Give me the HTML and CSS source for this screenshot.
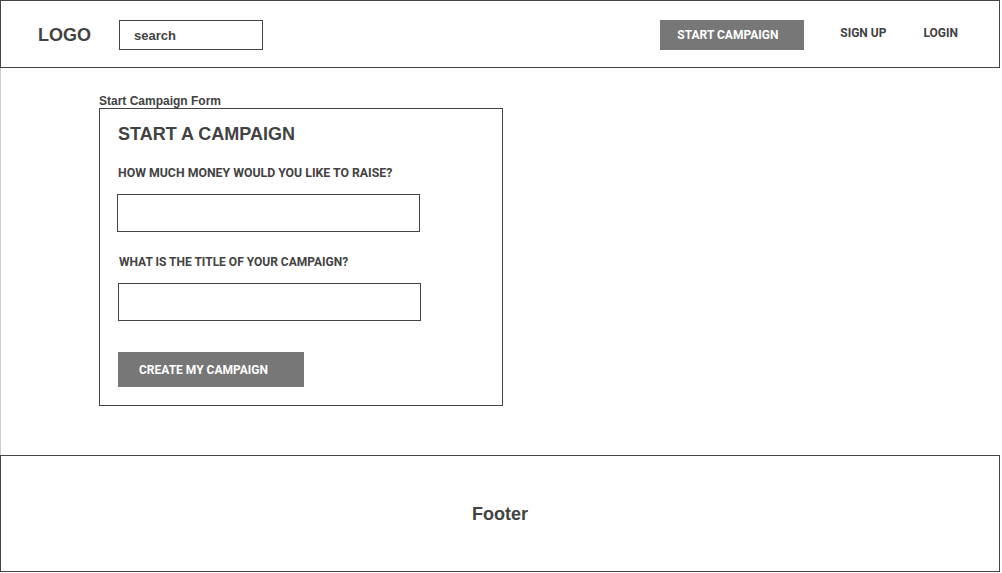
FILE: index.html
```html
<!DOCTYPE html>
<html lang="en">
<head>
<meta charset="utf-8">
<title>Start Campaign</title>
<link rel="stylesheet" href="styles.css">
</head>
<body>
<header class="topbar">
  <div class="logo">LOGO</div>
  <div class="search">search</div>
  <nav class="nav">
    <a class="btn btn-nav" href="#">START CAMPAIGN</a>
    <a class="nav-link signup" href="#">SIGN UP</a>
    <a class="nav-link login" href="#">LOGIN</a>
  </nav>
</header>
<main class="content">
  <div class="caption">Start Campaign Form</div>
  <section class="form-box">
    <h1 class="form-title">START A CAMPAIGN</h1>
    <label class="field-label first">HOW MUCH MONEY WOULD YOU LIKE TO RAISE?</label>
    <div class="field"></div>
    <label class="field-label second">WHAT IS THE TITLE OF YOUR CAMPAIGN?</label>
    <div class="field second"></div>
    <a class="btn btn-create" href="#">CREATE MY CAMPAIGN</a>
  </section>
</main>
<footer class="footer">Footer</footer>
</body>
</html>
```

FILE: styles.css
```css
* { box-sizing: border-box; }
html, body { margin: 0; padding: 0; background: #fff; }
body {
  width: 1002px;
  height: 573px;
  font-family: "Liberation Sans", Arial, sans-serif;
  color: #424242;
}
a { text-decoration: none; color: inherit; }

.topbar {
  width: 1000px;
  height: 68px;
  border: 1px solid #444;
  display: flex;
  align-items: center;
  padding-left: 37px;
}
.logo {
  font-size: 18px;
  font-weight: bold;
  width: 53px;
  margin-top: 2px;
}
.search {
  margin-left: 28px;
  width: 144px;
  height: 30px;
  border: 1px solid #444;
  font-size: 13px;
  font-weight: bold;
  padding-left: 14px;
  display: flex;
  align-items: center;
  margin-top: 2px;
}
.nav {
  margin-left: auto;
  display: flex;
  align-items: center;
  padding-right: 41px;
  font-family: Roboto, "Liberation Sans", sans-serif;
  font-weight: bold;
  font-size: 12px;
}
.btn {
  background: #777;
  color: #fff;
  font-family: Roboto, "Liberation Sans", sans-serif;
  font-weight: bold;
  font-size: 12px;
  display: flex;
  align-items: center;
}
.btn-nav {
  width: 144px;
  height: 30px;
  padding-left: 17px;
  margin-top: 2px;
}
.nav-link { margin-top: -2px; }
.signup { margin-left: 36px; }
.login { margin-left: 37px; }

.content {
  height: 387px;
  border-left: 1px solid #ccc;
  padding: 27px 0 0 98px;
}
.caption {
  font-size: 12px;
  font-weight: bold;
  line-height: 13px;
}
.form-box {
  width: 404px;
  height: 298px;
  border: 1px solid #444;
  padding: 14px 0 0 18px;
  display: flex;
  flex-direction: column;
  align-items: flex-start;
}
.form-title {
  margin: 0;
  font-size: 18px;
  line-height: 22px;
  font-weight: bold;
}
.field-label {
  margin-top: 21px;
  font-family: Roboto, "Liberation Sans", sans-serif;
  font-weight: bold;
  font-size: 12px;
  line-height: 14px;
}
.field-label.first { font-size: 12.3px; }
.field-label.second { margin-top: 23px; margin-left: 1px; }
.field {
  margin-top: 14px;
  margin-left: -1px;
  width: 303px;
  height: 38px;
  border: 1px solid #444;
}
.field.second { margin-left: 0; }
.btn-create {
  margin-top: 31px;
  width: 186px;
  height: 35px;
  padding-left: 21px;
}

.footer {
  width: 1000px;
  height: 117px;
  border: 1px solid #444;
  display: flex;
  align-items: center;
  justify-content: center;
  font-size: 18px;
  font-weight: bold;
  padding-top: 2px;
}
```
